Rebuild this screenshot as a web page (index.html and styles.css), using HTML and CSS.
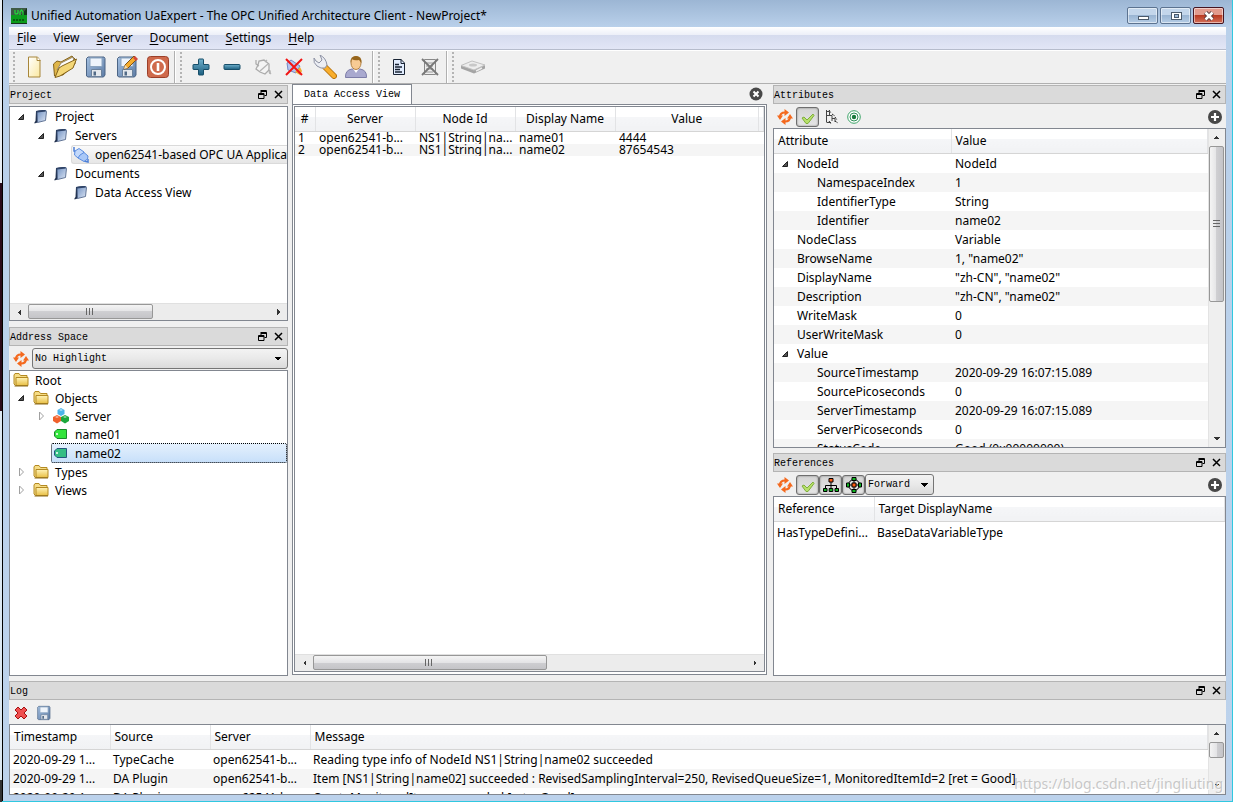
FILE: index.html
```html
<!DOCTYPE html>
<html lang="en">
<head>
<meta charset="utf-8">
<title>Unified Automation UaExpert</title>
<link rel="stylesheet" href="styles.css">
</head>
<body>
<svg class="defs" aria-hidden="true">
  <defs>
    <linearGradient id="gBook" x1="0" y1="0" x2="1" y2="1"><stop offset="0" stop-color="#6f8fc0"/><stop offset="1" stop-color="#dfe8f6"/></linearGradient>
    <linearGradient id="gFolder" x1="0" y1="0" x2="0" y2="1"><stop offset="0" stop-color="#fff3b8"/><stop offset="1" stop-color="#e8bf45"/></linearGradient>
    <linearGradient id="gDisk" x1="0" y1="0" x2="1" y2="1"><stop offset="0" stop-color="#a5c1e2"/><stop offset="1" stop-color="#5d7ca5"/></linearGradient>
    <linearGradient id="gTeal" x1="0" y1="0" x2="0" y2="1"><stop offset="0" stop-color="#6fb0cc"/><stop offset="1" stop-color="#1c5f80"/></linearGradient>
    <linearGradient id="gPage" x1="0" y1="0" x2="1" y2="1"><stop offset="0" stop-color="#ffffff"/><stop offset="1" stop-color="#fbe9a0"/></linearGradient>
    <symbol id="book" viewBox="0 0 16 16"><path d="M3 2 5 2 4.500 13.500 1.500 14.500Q1 13 2.500 12Z" fill="#1f2f4c"/><path d="M4 2.500 13 1.500 13.500 2.500 12.500 11.500 4.500 13.500Z" fill="url(#gBook)" stroke="#44597f" stroke-width=".8"/><path d="M3 2Q7 .5 12 1L13 2.500 4 3.500Z" fill="#2f4468"/></symbol>
    <symbol id="folder" viewBox="0 0 16 16"><path d="M1 12V3L2 1.500H6L7.500 3.500H14V13.500H2.500Z" fill="#f6dd86" stroke="#b48a22"/><path d="M3 5.500H15V13.500H3Z" fill="url(#gFolder)" stroke="#b48a22"/><path d="M1.500 14H15" stroke="#8b6b1c"/></symbol>
    <symbol id="plug" viewBox="0 0 16 16"><path d="M1 0V4L3 5M11 14 15 15V12" fill="none" stroke="#4c7fd6" stroke-width="1.500"/><path d="M2 4 6 1.500 11 5 9 9 5 11 1.500 8Z" fill="#c3d9fb" stroke="#5a8ce0"/><path d="M5 11 7 8 11 5.500 15 9 14.500 12 11 14.500Z" fill="#a9c8f8" stroke="#5a8ce0"/></symbol>
    <symbol id="objects" viewBox="0 0 16 16"><path d="m4.500 2 3.500-2 3.500 2V6L8 8 4.500 6Z" fill="#4bb4ea"/><path d="m0 9 4-2 4 2v4l-4 2.500L0 13Z" fill="#f0612c"/><path d="m8 9 4-2 4 2v4l-4 2.500L8 13Z" fill="#1ca83c"/><path d="m6 2 2-1 2 1-2 1ZM2 9 4 8l2 1-2 1ZM10 9 12 8l2 1-2 1Z" fill="#fff" opacity=".55"/></symbol>
    <symbol id="tag" viewBox="0 0 16 16"><path d="M4 3.500H13.500V12.500H4L1.500 10V6Z" fill="#32e43c" stroke="#188a2a"/><circle cx="4" cy="8" r="1" fill="#fff"/></symbol>
    <symbol id="tagsel" viewBox="0 0 16 16"><path d="M4 3.500H13.500V12.500H4L1.500 10V6Z" fill="#35bd84" stroke="#24577e"/><circle cx="4" cy="8" r="1" fill="#fff"/></symbol>
    <symbol id="open" viewBox="0 0 10 10"><path d="M7.500 2.500V7.500H2.500Z" fill="#555" stroke="#222"/></symbol>
    <symbol id="shut" viewBox="0 0 10 10"><path d="M3.500 1 7.500 5 3.500 9Z" fill="#fff" stroke="#a0a0a0"/></symbol>
    <symbol id="float" viewBox="0 0 9 9"><path d="M3 .5H8.500V5.500H6.500M3 1.500H8.500M3 0V3" fill="none" stroke="#000"/><path d="M.5 3.500H6V8.500H.5ZM.5 4.500H6" fill="none" stroke="#000"/></symbol>
    <symbol id="cross" viewBox="0 0 9 9"><path d="m1 1 7 7M8 1 1 8" stroke="#000" stroke-width="1.500"/></symbol>
    <symbol id="refresh" viewBox="0 0 16 16"><path d="M3 8Q3 3.500 8 3.500M13 8Q13 12.500 8 12.500" fill="none" stroke="#f4691e" stroke-width="2.200"/><path d="M0 6.500H6L3 11ZM10 9.500H16L13 5ZM7.500 0 12 3.500 7.500 7ZM8.500 16 4 12.500 8.500 9Z" fill="#f4691e"/></symbol>
    <symbol id="check" viewBox="0 0 16 16"><path d="m2 9 2-1 3 3 6-6 1 1.500-6 8H6Z" fill="#b7e06b" stroke="#7fae3c"/></symbol>
    <symbol id="plusround" viewBox="0 0 16 16"><circle cx="8" cy="8" r="7" fill="#484848"/><path d="M8 4v8M4 8h8" stroke="#fff" stroke-width="2.200"/></symbol>
    <symbol id="closeround" viewBox="0 0 16 16"><circle cx="8" cy="8" r="6.500" fill="#484848"/><path d="m5.500 5.500 5 5M10.500 5.500l-5 5" stroke="#fff" stroke-width="2"/></symbol>
    <symbol id="treeic" viewBox="0 0 16 16"><path d="M3.500 1V13M3.500 2.500H6.500V6M3.500 6.500H9V12M9 9.500H12V13M3.500 13.500H8" fill="none" stroke="#444"/><path d="m6 1 2 3M9 5l3 2M12 8l2 3M12 12l3 2M6 12l2 3" stroke="#222" stroke-dasharray="2 1"/></symbol>
    <symbol id="target" viewBox="0 0 16 16"><circle cx="8" cy="8" r="6.300" fill="#fff" stroke="#3da468"/><circle cx="8" cy="8" r="4" fill="none" stroke="#2d9058"/><circle cx="8" cy="8" r="2.200" fill="#187a3c"/></symbol>
    <symbol id="hier" viewBox="0 0 16 16"><path d="M8 5V12M2.500 12V8.500H13.500V12" fill="none" stroke="#000"/><path d="M6 1.500H10V5H6Z" fill="#ff5a10" stroke="#000"/><path d="M.5 11.500H4V14.500H.5ZM6.200 11.500H9.800V14.500H6.200ZM12 11.500H15.500V14.500H12Z" fill="#11b622" stroke="#000"/></symbol>
    <symbol id="ring" viewBox="0 0 16 16"><circle cx="8" cy="8" r="5.500" fill="none" stroke="#000"/><path d="M8 3v10M3 8h10" stroke="#000"/><path d="M6 .5h4v3H6ZM6 12.500h4v3H6ZM.5 6h3v4h-3ZM12.500 6h3v4h-3Z" fill="#11b622" stroke="#000"/><path d="M6 6h4v4H6Z" fill="#ff5a10" stroke="#000"/></symbol>
    <symbol id="disk" viewBox="0 0 24 24"><path d="M2.500 3.500 4 2H20L21 3.500V20L19.500 22H4L2.500 21Z" fill="url(#gDisk)" stroke="#4c6585"/><path d="M6 3H18V11.500H6Z" fill="#eef4fb" stroke="#8ba4bf"/><path d="M7.500 14.500H17.500V21.500H7.500Z" fill="#e4e8ed" stroke="#6b819b"/><path d="M9.500 16.500H12V20.500H9.500Z" fill="#526b87"/></symbol>
  </defs>
</svg>
<div class="window">
  <header class="titlebar">
    <svg class="appicon" viewBox="0 0 16 16"><rect width="16" height="16" fill="#16331c"/><rect x="0" y="7" width="16" height="8" fill="#0b9c1c"/><path d="M0 0H16L10 7H0Z" fill="#3f5a45"/><path d="M4 2V5Q4 6 5 6T7 5V2M9 7V4L10.500 2 12 4V7" stroke="#21e03a" fill="none" stroke-width="1.200"/><path d="M2 12H14" stroke="#0a5b14" stroke-dasharray="2 1" stroke-width="2"/></svg>
    <h1 class="title">Unified Automation UaExpert - The OPC Unified Architecture Client - NewProject*</h1>
    <div class="winbuttons">
      <button class="winbtn" aria-label="Minimize"><svg viewBox="0 0 28 14"><rect x="9.500" y="7.500" width="10" height="3" fill="#fff" stroke="#4b5a6b"/></svg></button>
      <button class="winbtn" aria-label="Maximize"><svg viewBox="0 0 28 14"><rect x="9.500" y="3.500" width="10" height="7" fill="#fff" stroke="#4b5a6b"/><rect x="12.500" y="5.500" width="4" height="3" fill="#9db9d8" stroke="#4b5a6b"/></svg></button>
      <button class="winbtn danger" aria-label="Close"><svg viewBox="0 0 28 14"><path d="m10.500 3.500 7 7M17.500 3.500l-7 7" stroke="#553c40" stroke-width="4.500"/><path d="m10.500 3.500 7 7M17.500 3.500l-7 7" stroke="#fff" stroke-width="2.500"/></svg></button>
    </div>
  </header>
  <nav class="menubar">
    <button class="menu"><u>F</u>ile</button><button class="menu">View</button><button class="menu"><u>S</u>erver</button><button class="menu"><u>D</u>ocument</button><button class="menu"><u>S</u>ettings</button><button class="menu"><u>H</u>elp</button>
  </nav>
  <div class="toolbar">
    <div class="group">
      <button class="tool" aria-label="New"><svg viewBox="0 0 24 24"><path d="M6.500 2H15.500L18 5V22H6.500Z" fill="url(#gPage)" stroke="#a7863a"/><path d="M15 2V5.500H18.500" fill="#fff" stroke="#a7863a"/></svg></button>
      <button class="tool" aria-label="Open"><svg viewBox="0 0 24 24"><path d="M1.500 21 .5 9 4 6 8 7 19 1 22 4V9L10 20Z" fill="#e0b64a" stroke="#84631b"/><path d="M4 15 8 8 20 2 21 7Z" fill="#fdfdfd" stroke="#98896a"/><path d="M2 22.500 6 13 9 11 23.500 4 20 13 7 21Z" fill="#f4d777" stroke="#84631b"/></svg></button>
      <button class="tool" aria-label="Save"><svg><use href="#disk"/></svg></button>
      <button class="tool" aria-label="Save as"><svg viewBox="0 0 24 24"><use href="#disk"/><path d="m9 14 1-4L19 1l3 3-9 9Z" fill="#f6ac2c" stroke="#7d5216"/><path d="m18 3 2-2 3 3-2 2Z" fill="#d4463a"/><path d="m9 14 1-4 3 3Z" fill="#f3dcb4"/></svg></button>
      <button class="tool" aria-label="Exit"><svg viewBox="0 0 24 24"><rect x="1.500" y="1.500" width="21" height="21" rx="3" fill="#cf6a4c" stroke="#9c3f29"/><circle cx="12" cy="12" r="7" fill="none" stroke="#fff" stroke-width="2"/><path d="M12 8V16" stroke="#fff" stroke-width="2.600"/></svg></button>
    </div>
    <div class="group">
      <button class="tool" aria-label="Add server"><svg viewBox="0 0 24 24"><path d="M9.500 4.500Q9.500 4 10 4H14Q14.500 4 14.500 4.500V9.500H19.500Q20 9.500 20 10V14Q20 14.500 19.500 14.500H14.500V19.500Q14.500 20 14 20H10Q9.500 20 9.500 19.500V14.500H4.500Q4 14.500 4 14V10Q4 9.500 4.500 9.500H9.500Z" fill="url(#gTeal)" stroke="#174e69"/></svg></button>
      <button class="tool" aria-label="Remove server"><svg viewBox="0 0 24 24"><rect x="4" y="9.500" width="16" height="5" rx="1" fill="url(#gTeal)" stroke="#174e69"/></svg></button>
      <button class="tool" aria-label="Connect"><svg viewBox="0 0 24 24"><path d="M5 5v4l3 2M19 19v-3l-2-1M7 10 8 6 13 5 18 9V15L14 19 9 17 5 14Z" fill="#f4f4f4" stroke="#ababab" stroke-width="1.300"/><path d="m9 16 8-7M14 7l2-2M18 17l2 2" stroke="#b5b5b5" stroke-width="1.300"/></svg></button>
      <button class="tool" aria-label="Disconnect"><svg viewBox="0 0 24 24"><path d="m5 8 4-3 9 6-4 7-8-3Z" fill="#b6c5f1" stroke="#7588c4"/><path d="m13 17 5-5 2 4-2 4Z" fill="#f0ac35"/><path d="m4 4 16 16M20 4 4 20" stroke="#f21414" stroke-width="2"/></svg></button>
      <button class="tool" aria-label="Options"><svg viewBox="0 0 24 24"><path d="m12 12 9 9" stroke="#b87512" stroke-width="6" stroke-linecap="round"/><path d="m12 12 9 9" stroke="#f9ae2c" stroke-width="4" stroke-linecap="round"/><path d="M1 3Q0 8 4 11T12 13L14 10Q13 3 7 0L9 5 6 8 3 6Z" fill="#eceef4" stroke="#8c91a3"/></svg></button>
      <button class="tool" aria-label="User"><svg viewBox="0 0 24 24"><path d="M1.500 22.500Q1 15 8 14H16Q23 15 22.500 22.500Z" fill="#a9a9cf" stroke="#7d7da8"/><path d="M8.500 13H15.500L12 18Z" fill="#fff"/><ellipse cx="12" cy="8" rx="5" ry="6.500" fill="#f7cb94" stroke="#b58242"/><path d="M6.500 8Q6 1 12 1T17.500 8L15 5Q10 6 8 4Z" fill="#96651c"/></svg></button>
    </div>
    <div class="group">
      <button class="tool" aria-label="Add document"><svg viewBox="0 0 24 24"><path d="M6.500 4.500H14L17.500 8V19.500H6.500Z" fill="#e2edff" stroke="#182333"/><path d="M14 4V8.500H18" fill="none" stroke="#182333"/><path d="M8 9.500H12M8 12H15M8 14.500H13M8 17H15" stroke="#182333" stroke-width="1.300"/></svg></button>
      <button class="tool" aria-label="Remove document"><svg viewBox="0 0 24 24"><path d="M6.500 4.500H17.500V19.500H6.500Z" fill="#ededed" stroke="#888"/><path d="M8 8H15M8 11H15M8 14H15M8 17H15" stroke="#999"/><path d="m4 4 16 16M20 4 4 20" stroke="#777" stroke-width="1.800"/></svg></button>
    </div>
    <div class="group last">
      <button class="tool" aria-label="Device"><svg viewBox="0 0 24 24"><path d="M0 10.500 12 14.500 24 10V13.500L13 18.500 0 13.500Z" fill="#a4a4a4"/><path d="M0 10.500 11 6 24 10 13 15Z" fill="#ededed" stroke="#c0c0c0"/><ellipse cx="12" cy="10" rx="4" ry="1.500" fill="#c8c8c8"/><path d="m15 16 6-3" stroke="#eee" stroke-width="1.500"/></svg></button>
    </div>
  </div>
  <main class="workspace">
    <div class="docks">
      <div class="column leftcol">
        <section class="panel project">
          <div class="paneltitle"><h2>Project</h2><button class="mini" aria-label="Float Project"><svg><use href="#float"/></svg></button><button class="mini" aria-label="Close Project"><svg><use href="#cross"/></svg></button></div>
          <div class="box projectbox">
            <ul class="tree">
              <li class="row l0"><svg class="arrow"><use href="#open"/></svg><span class="cell"><svg class="ic"><use href="#book"/></svg>Project</span></li>
              <li class="row l1"><svg class="arrow"><use href="#open"/></svg><span class="cell"><svg class="ic"><use href="#book"/></svg>Servers</span></li>
              <li class="row l3"><span class="cell hot"><svg class="ic"><use href="#plug"/></svg>open62541-based OPC UA Application</span></li>
              <li class="row l1"><svg class="arrow"><use href="#open"/></svg><span class="cell"><svg class="ic"><use href="#book"/></svg>Documents</span></li>
              <li class="row l3"><span class="cell"><svg class="ic"><use href="#book"/></svg>Data Access View</span></li>
            </ul>
            <div class="hscroll"><i class="left"></i><div class="track"><div class="thumb shortthumb"></div></div><i class="right"></i></div>
          </div>
        </section>
        <section class="panel address">
          <div class="paneltitle"><h2>Address Space</h2><button class="mini" aria-label="Float Address Space"><svg><use href="#float"/></svg></button><button class="mini" aria-label="Close Address Space"><svg><use href="#cross"/></svg></button></div>
          <div class="panelbar">
            <button class="small" aria-label="Refresh"><svg><use href="#refresh"/></svg></button>
            <select class="combo wide" aria-label="Highlight"><option>No Highlight</option></select>
          </div>
          <div class="box">
            <ul class="tree compact">
              <li class="row l0"><span class="cell"><svg class="ic"><use href="#folder"/></svg>Root</span></li>
              <li class="row l0"><svg class="arrow"><use href="#open"/></svg><span class="cell"><svg class="ic"><use href="#folder"/></svg>Objects</span></li>
              <li class="row l1"><svg class="arrow"><use href="#shut"/></svg><span class="cell"><svg class="ic"><use href="#objects"/></svg>Server</span></li>
              <li class="row l2"><span class="cell"><svg class="ic"><use href="#tag"/></svg>name01</span></li>
              <li class="row l2 tall"><span class="cell selected"><svg class="ic"><use href="#tagsel"/></svg>name02</span></li>
              <li class="row l0"><svg class="arrow"><use href="#shut"/></svg><span class="cell"><svg class="ic"><use href="#folder"/></svg>Types</span></li>
              <li class="row l0"><svg class="arrow"><use href="#shut"/></svg><span class="cell"><svg class="ic"><use href="#folder"/></svg>Views</span></li>
            </ul>
          </div>
        </section>
      </div>
      <section class="center">
        <div class="tabs"><button class="tab">Data Access View</button><button class="small tabclose" aria-label="Close tab"><svg><use href="#closeround"/></svg></button></div>
        <div class="frame"><div class="box">
          <div class="grow">
            <table class="grid data">
              <colgroup><col class="c20"><col class="c100"><col class="c100"><col class="c100"><col><col class="c5"></colgroup>
              <thead><tr><th>#</th><th>Server</th><th>Node Id</th><th>Display Name</th><th>Value</th><th></th></tr></thead>
              <tbody>
                <tr><td>1</td><td>open62541-b...</td><td>NS1|String|na...</td><td>name01</td><td>4444</td><td></td></tr>
                <tr><td>2</td><td>open62541-b...</td><td>NS1|String|na...</td><td>name02</td><td>87654543</td><td></td></tr>
              </tbody>
            </table>
          </div>
          <div class="hscroll"><i class="left"></i><div class="track"><div class="thumb longthumb"></div></div><i class="right"></i></div>
        </div></div>
      </section>
      <div class="column">
        <section class="panel attributes">
          <div class="paneltitle"><h2>Attributes</h2><button class="mini" aria-label="Float Attributes"><svg><use href="#float"/></svg></button><button class="mini" aria-label="Close Attributes"><svg><use href="#cross"/></svg></button></div>
          <div class="panelbar">
            <button class="small" aria-label="Refresh"><svg><use href="#refresh"/></svg></button>
            <button class="small pressed" aria-pressed="true" aria-label="Auto update"><svg><use href="#check"/></svg></button>
            <button class="small" aria-label="Expand tree"><svg><use href="#treeic"/></svg></button>
            <button class="small" aria-label="Track"><svg><use href="#target"/></svg></button>
            <button class="small end" aria-label="Add"><svg><use href="#plusround"/></svg></button>
          </div>
          <div class="box side">
            <div class="grow">
              <table class="grid attrs">
                <colgroup><col class="c177"><col></colgroup>
                <thead><tr><th>Attribute</th><th>Value</th></tr></thead>
                <tbody>
                  <tr><td><svg class="arrow"><use href="#open"/></svg>NodeId</td><td>NodeId</td></tr>
                  <tr><td class="sub">NamespaceIndex</td><td>1</td></tr>
                  <tr><td class="sub">IdentifierType</td><td>String</td></tr>
                  <tr><td class="sub">Identifier</td><td>name02</td></tr>
                  <tr><td class="top">NodeClass</td><td>Variable</td></tr>
                  <tr><td class="top">BrowseName</td><td>1, "name02"</td></tr>
                  <tr><td class="top">DisplayName</td><td>"zh-CN", "name02"</td></tr>
                  <tr><td class="top">Description</td><td>"zh-CN", "name02"</td></tr>
                  <tr><td class="top">WriteMask</td><td>0</td></tr>
                  <tr><td class="top">UserWriteMask</td><td>0</td></tr>
                  <tr><td><svg class="arrow"><use href="#open"/></svg>Value</td><td></td></tr>
                  <tr><td class="sub">SourceTimestamp</td><td>2020-09-29 16:07:15.089</td></tr>
                  <tr><td class="sub">SourcePicoseconds</td><td>0</td></tr>
                  <tr><td class="sub">ServerTimestamp</td><td>2020-09-29 16:07:15.089</td></tr>
                  <tr><td class="sub">ServerPicoseconds</td><td>0</td></tr>
                  <tr><td class="sub">StatusCode</td><td>Good (0x00000000)</td></tr>
                </tbody>
              </table>
            </div>
            <div class="vscroll"><i class="up"></i><div class="track"><div class="thumb tallthumb"></div></div><i class="down"></i></div>
          </div>
        </section>
        <section class="panel references">
          <div class="paneltitle"><h2>References</h2><button class="mini" aria-label="Float References"><svg><use href="#float"/></svg></button><button class="mini" aria-label="Close References"><svg><use href="#cross"/></svg></button></div>
          <div class="panelbar">
            <button class="small" aria-label="Refresh"><svg><use href="#refresh"/></svg></button>
            <button class="small pressed" aria-pressed="true" aria-label="Auto update"><svg><use href="#check"/></svg></button>
            <button class="small pressed" aria-pressed="true" aria-label="Hierarchical"><svg><use href="#hier"/></svg></button>
            <button class="small pressed" aria-pressed="true" aria-label="Non-hierarchical"><svg><use href="#ring"/></svg></button>
            <select class="combo" aria-label="Direction"><option>Forward</option></select>
            <button class="small end" aria-label="Add"><svg><use href="#plusround"/></svg></button>
          </div>
          <div class="box">
            <table class="grid refs">
              <colgroup><col class="c100"><col></colgroup>
              <thead><tr><th>Reference</th><th>Target DisplayName</th></tr></thead>
              <tbody><tr><td>HasTypeDefini...</td><td>BaseDataVariableType</td></tr></tbody>
            </table>
          </div>
        </section>
      </div>
    </div>
    <section class="panel log">
      <div class="paneltitle"><h2>Log</h2><button class="mini" aria-label="Float Log"><svg><use href="#float"/></svg></button><button class="mini" aria-label="Close Log"><svg><use href="#cross"/></svg></button></div>
      <div class="panelbar">
        <button class="small" aria-label="Clear log"><svg viewBox="0 0 16 16"><path d="m2 5 3-3 3 3 3-3 3 3-3 3 3 3-3 3-3-3-3 3-3-3 3-3Z" fill="#f05050" stroke="#a41212"/></svg></button>
        <button class="small" aria-label="Save log"><svg><use href="#disk"/></svg></button>
      </div>
      <div class="box side">
        <div class="grow">
          <table class="grid logs">
            <colgroup><col class="c100"><col class="c100"><col class="c100"><col></colgroup>
            <thead><tr><th>Timestamp</th><th>Source</th><th>Server</th><th>Message</th></tr></thead>
            <tbody>
              <tr><td>2020-09-29 1...</td><td>TypeCache</td><td>open62541-b...</td><td>Reading type info of NodeId NS1|String|name02 succeeded</td></tr>
              <tr><td>2020-09-29 1...</td><td>DA Plugin</td><td>open62541-b...</td><td>Item [NS1|String|name02] succeeded : RevisedSamplingInterval=250, RevisedQueueSize=1, MonitoredItemId=2 [ret = Good]</td></tr>
              <tr><td>2020-09-29 1...</td><td>DA Plugin</td><td>open62541-b...</td><td>CreateMonitoredItems succeeded [ret = Good]</td></tr>
            </tbody>
          </table>
        </div>
        <div class="vscroll"><i class="up"></i><div class="track"><div class="thumb tinythumb"></div></div><i class="down"></i></div>
      </div>
    </section>
  </main>
</div>
<div class="watermark">https://blog.csdn.net/jingliuting</div>
</body>
</html>
```

FILE: styles.css
```css
* { box-sizing: border-box; }
html, body { height: 100%; margin: 0; }
body {
  font: 12px/19px "Noto Sans", "Open Sans", sans-serif;
  color: #000;
  overflow: hidden;
  padding-left: 2px;
  background: linear-gradient(#e8eef4 0 183px, #2a0a18 183px 411px, #dce8f2 411px 780px, #333 780px);
}
button, select { font: inherit; color: inherit; margin: 0; padding: 0; border: 0; background: none; }
button { display: flex; align-items: center; justify-content: center; }
h1, h2 { margin: 0; font: inherit; }
svg { display: block; flex: none; }
.defs { position: absolute; width: 0; height: 0; }

.window {
  height: 100%;
  display: flex;
  flex-direction: column;
  padding: 0 6px 6px 7px;
  border: solid #30c8e0;
  border-width: 0 1px 1px 0;
  box-shadow: inset 1px 0 #000;
  background: linear-gradient(#9cb6d4, #b9d0ea 27px, #bcd2ec);
}
.titlebar { flex: none; height: 27px; display: flex; align-items: center; gap: 4px; padding: 4px 2px 0; }
.appicon { width: 16px; height: 16px; }
.title { flex: 1; }
.winbuttons { display: flex; gap: 2px; }
.winbtn {
  width: 31px; height: 17px;
  border: 1px solid #5c7390; border-radius: 2px;
  box-shadow: inset 0 0 0 1px rgba(255,255,255,.5);
  background: linear-gradient(#c3d6eb 50%, #9ab5d3 50%, #b5cde6);
}
.winbtn svg { width: 28px; height: 14px; }
.danger { border-color: #451521; background: linear-gradient(#e29b8e 50%, #b93a22 50%, #d4705a); }

.menubar { flex: none; height: 23px; display: flex; padding: 0 8px; gap: 17px; background: linear-gradient(#fff, #eceff8 8px, #d5dbee 8px, #e2e6f6); border-bottom: 1px solid #b6bccc; }
.menu { line-height: 22px; }
.menu u { text-underline-offset: 2px; }

.toolbar { flex: none; height: 34px; display: flex; background: #f0f0f0; border-top: 1px solid #fff; border-bottom: 1px solid #b0b0b0; }
.group {
  display: flex; align-items: center;
  padding: 0 1px 0 9px; margin-right: 1px;
  border-right: 1px solid #b0b0b0;
  box-shadow: 1px 0 #fff;
  background: linear-gradient(#f0f0f0 2px, transparent 2px) 4px 3px / 2px 4px repeat-y, linear-gradient(90deg, transparent 4px, #b4b4b4 4px 6px, transparent 6px);
}
.last { border: 0; box-shadow: none; }
.tool { width: 31px; height: 31px; }
.tool svg { width: 24px; height: 24px; }

.workspace { flex: 1; min-height: 0; display: grid; grid-template-rows: 591fr 114fr; gap: 5px; background: #f0f0f0; padding-top: 1px; }
.docks { min-height: 0; display: grid; grid-template-columns: 279px minmax(0, 1fr) 453px; gap: 5px; }
.column { min-width: 0; min-height: 0; display: flex; flex-direction: column; gap: 5px; }
.leftcol { gap: 6px; }
.panel { min-width: 0; min-height: 0; display: flex; flex-direction: column; }
.project { flex: 236 1 0; }
.address { flex: 349 1 0; }
.attributes { flex: 363 1 0; }
.references { flex: 223 1 0; }
.paneltitle { flex: none; height: 19px; display: flex; align-items: center; padding-right: 1px; background: #dadada; border: 1px solid #b4b4b4; font: 10px/17px "Liberation Mono", monospace; }
.paneltitle h2 { flex: 1; padding-top: 2px; }
.mini { width: 16px; height: 16px; }
.mini svg { width: 9px; height: 9px; }
.panelbar { flex: none; height: 24px; display: flex; align-items: center; padding-top: 1px; }
.small { width: 23px; height: 20px; }
.small svg { width: 16px; height: 16px; }
.pressed { border: 1px solid #6e6e6e; border-radius: 3px; background: linear-gradient(#d4d4d4, #e6e6e6); box-shadow: inset 0 0 2px #777; }
.end { margin-left: auto; }
.combo {
  appearance: none;
  height: 21px; width: 69px; padding: 0 2px;
  border: 1px solid #757575; border-radius: 3px;
  font: 10px "Liberation Mono", monospace;
  background:
    linear-gradient(to top right, transparent 50%, #000 50%) right 9px center / 4px 4px no-repeat,
    linear-gradient(to top left, transparent 50%, #000 50%) right 5px center / 4px 4px no-repeat,
    linear-gradient(#f3f3f3, #e9e9e9 50%, #dadada);
}
.wide { flex: 1; }
.box { flex: 1; min-height: 0; display: flex; flex-direction: column; overflow: hidden; border: 1px solid #828790; background: #fff; }
.projectbox { margin-top: 2px; }
.side { flex-direction: row; }
.grow { flex: 1; min-width: 0; min-height: 0; overflow: hidden; }

.tree { list-style: none; margin: 0; padding: 0; flex: 1; min-height: 0; overflow: hidden; white-space: nowrap; }
.row { height: 19px; display: flex; align-items: center; }
.compact .row { height: 18px; }
.compact .tall { height: 20px; }
.l0 { padding-left: 1px; }
.l1 { padding-left: 21px; }
.l2 { padding-left: 41px; }
.l3 { padding-left: 61px; }
.arrow { width: 10px; height: 10px; margin: 0 5px; }
.cell { flex: 1; min-width: 0; height: 100%; display: flex; align-items: center; gap: 6px; padding-left: 2px; }
.ic { width: 16px; height: 16px; }
.hot { padding-left: 1px; border: 1px solid #dadada; border-right: 0; border-radius: 3px 0 0 3px; background: linear-gradient(#fafafa, #e6e6e6); }
.selected { outline: 1px dotted #000; outline-offset: -1px; border-radius: 2px; background: linear-gradient(#e6f1fd, #c6dffa); }

.hscroll { flex: none; height: 17px; display: flex; align-items: center; background: #ececec; border-top: 1px solid #e0e0e0; }
.vscroll { flex: none; width: 17px; display: flex; flex-direction: column; align-items: center; background: #efefef; border-left: 1px solid #e3e3e3; }
.track { flex: 1; align-self: stretch; min-height: 0; }
.left, .right { width: 18px; height: 9px; }
.up, .down { width: 9px; height: 17px; }
.left { background: conic-gradient(from 45deg at 0 50%, #333 90deg, transparent 0) center / 3px 6px no-repeat; }
.right { background: conic-gradient(from 225deg at 100% 50%, #333 90deg, transparent 0) center / 3px 6px no-repeat; }
.up { background: conic-gradient(from 135deg at 50% 0, #333 90deg, transparent 0) center / 6px 3px no-repeat; }
.down { background: conic-gradient(from 315deg at 50% 100%, #333 90deg, transparent 0) center / 6px 3px no-repeat; }
.thumb { border: 1px solid #979797; border-radius: 2px; }
.hscroll .thumb {
  height: 15px;
  background:
    repeating-linear-gradient(90deg, #666 0 1px, transparent 1px 3px) center / 9px 7px no-repeat,
    linear-gradient(#f4f4f4, #e4e4e6 50%, #cfcfd2 50%, #c4c4c8);
}
.vscroll .thumb { width: 15px; background: linear-gradient(90deg, #f4f4f4, #e4e4e6 50%, #cfcfd2 50%, #c4c4c8); }
.vscroll .tallthumb { background: repeating-linear-gradient(#666 0 1px, transparent 1px 3px) center / 7px 9px no-repeat, linear-gradient(90deg, #f4f4f4, #e4e4e6 50%, #cfcfd2 50%, #c4c4c8); }
.shortthumb { width: 52%; }
.longthumb { width: 54%; }
.tallthumb { height: 55%; }
.tinythumb { height: 16px; }

.center { min-width: 0; min-height: 0; display: flex; flex-direction: column; margin: -1px 1px 1px -1px; }
.tabs { flex: none; height: 20px; display: flex; align-items: stretch; }
.tab { width: 120px; padding-top: 1px; background: #fff; border: 1px solid #828790; border-bottom: 0; font: 10px/18px "Liberation Mono", monospace; }
.tabclose { margin-left: auto; }
.frame { flex: 1; min-height: 0; display: flex; padding: 1px 1px 2px; border: 1px solid #828790; background: #fff; }

.grid { width: 100%; table-layout: fixed; border-collapse: collapse; }
.c5 { width: 5px; }
.c20 { width: 20px; }
.c100 { width: 100px; }
.c177 { width: 177px; }
.grid th, .grid td { padding: 0 0 0 4px; font-weight: normal; text-align: left; white-space: nowrap; overflow: hidden; }
.grid th { height: 24px; border-right: 1px solid #e2e3e5; border-bottom: 1px solid #d5d5d5; background: linear-gradient(#fff 40%, #f5f6f8 40%, #f1f2f4); }
.grid td { height: 19px; line-height: 19px; }
.grid tbody tr:nth-child(even) { background: #f5f5f5; }
.grid .sub { padding-left: 43px; }
.grid .top { padding-left: 23px; }
.grid td .arrow { display: inline-block; margin: 0 7px 0 2px; vertical-align: -1px; }
.data th { text-align: center; padding: 0; }
.grid.data td { height: 12px; line-height: 12px; }
.data td:first-child { padding-left: 3px; }
.logs td, .refs td { padding-left: 3px; }
.refs tbody::before { content: ""; display: block; height: 1px; }

.watermark { position: absolute; right: 10px; bottom: 8px; font-size: 14px; line-height: 20px; color: rgba(150,150,150,.5); text-shadow: 1px 1px rgba(255,255,255,.8); pointer-events: none; }
```
